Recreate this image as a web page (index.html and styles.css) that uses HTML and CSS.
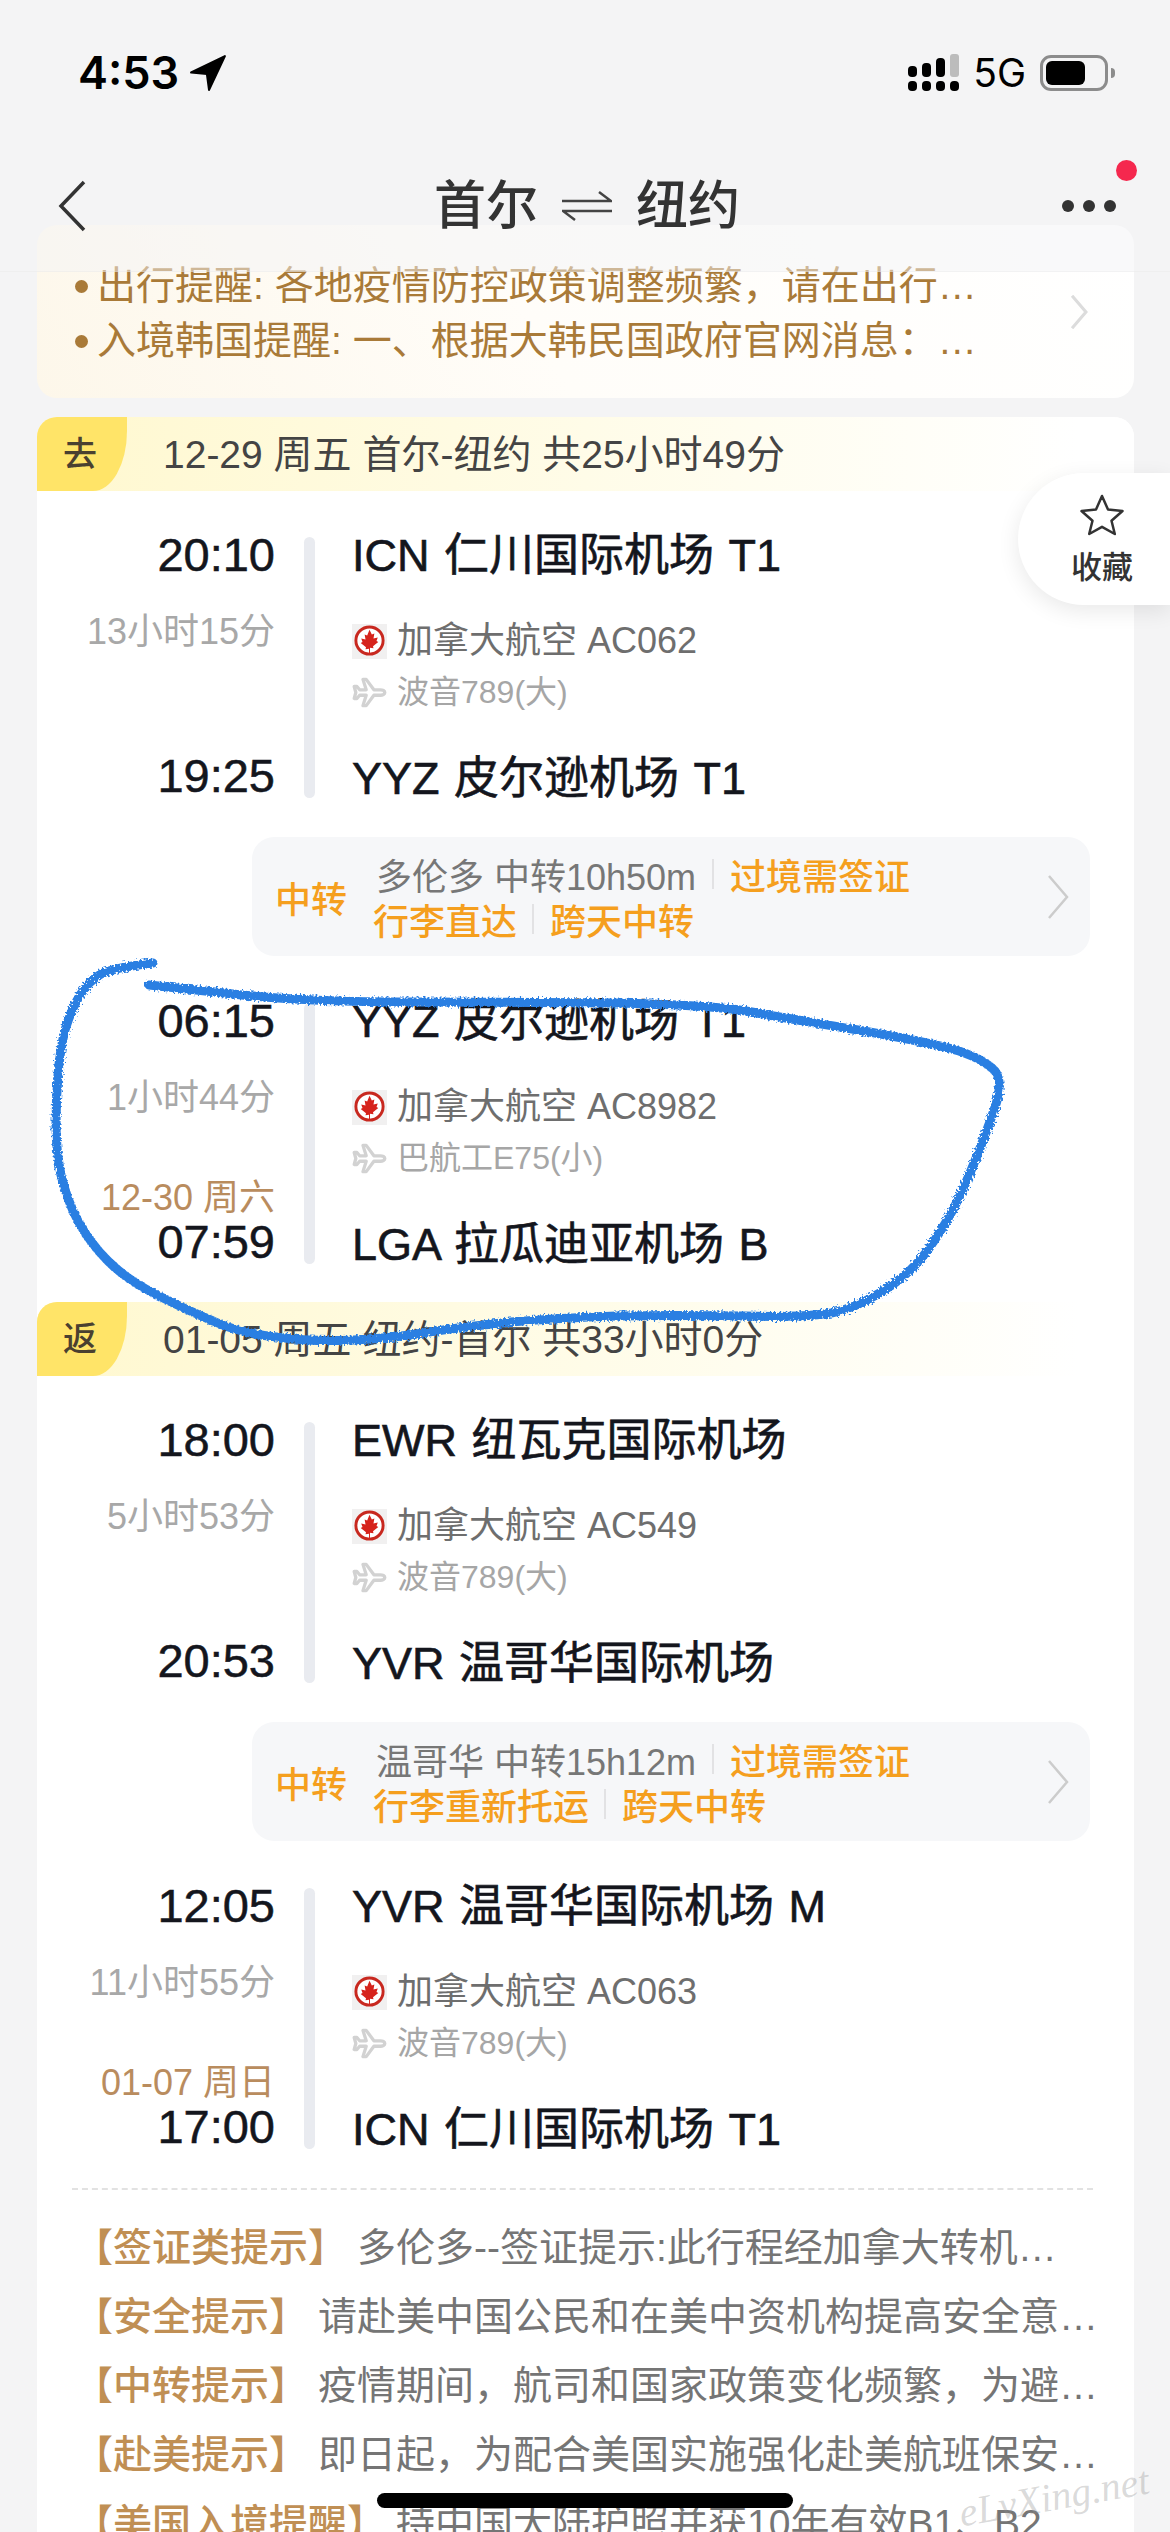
FILE: index.html
```html
<!DOCTYPE html>
<html lang="zh-CN">
<head>
<meta charset="utf-8">
<title>首尔 纽约</title>
<link rel="stylesheet" href="styles.css">
</head>
<body>
<svg class="defs" aria-hidden="true">
  <symbol id="ac" viewBox="0 0 36 36">
    <rect width="36" height="36" fill="#f1f0f0"/>
    <circle cx="18" cy="17" r="14" fill="#fff" stroke="#c8281f" stroke-width="3"/>
    <path fill="#d6231c" d="M18 6l2.4 4.8 2.6-1-.9 5.2 4.4-1-1.3 3.6 1.8 1-5.400 4.200.5 2.100-3.600-.5V31h-1v-5.500l-3.600.5.500-2.100L9 19.600l1.800-1-1.300-3.600 4.400 1-.9-5.200 2.600 1z"/>
  </symbol>
  <symbol id="plane" viewBox="0 0 32 32">
    <path fill="none" stroke="#d2d2d2" stroke-width="3" stroke-linejoin="round" d="M30 16c0-1.500-2-2.500-4-2.500h-6L13 4h-3l3 9.500H7l-2.500-3H2L3.500 16 2 21.500h2.500l2.500-3h6L10 28h3l7-9.500h6c2 0 4-1 4-2.500z"/>
  </symbol>
  <symbol id="chev" viewBox="0 0 22 44">
    <path fill="none" stroke="currentColor" d="M2 1l18 21L2 43"/>
  </symbol>
  <filter id="pen" x="-5%" y="-5%" width="110%" height="110%">
    <feTurbulence type="fractalNoise" baseFrequency="0.5" numOctaves="2" seed="4"/>
    <feDisplacementMap in="SourceGraphic" scale="7"/>
  </filter>
</svg>

<div class="screen">
  <header class="topbar">
    <div class="status">
      <div class="clock">
        <span>4:53</span>
        <svg class="loc" viewBox="0 0 36 36"><path fill="#000" stroke="#000" stroke-width="2" stroke-linejoin="round" d="M34 2L2 17.500l15 1.500 2 15z"/></svg>
      </div>
      <div class="status-right">
        <svg class="signal" viewBox="0 0 52 38">
          <g fill="#000">
            <rect x="0" y="12" width="9" height="11" rx="4"/><rect x="14" y="9" width="9" height="14" rx="4"/><rect x="28" y="4" width="9" height="19" rx="4"/>
            <rect x="0" y="27" width="9" height="10" rx="4"/><rect x="14" y="27" width="9" height="10" rx="4"/><rect x="28" y="27" width="9" height="10" rx="4"/><rect x="42" y="27" width="9" height="10" rx="4"/>
          </g>
          <rect x="42" y="0" width="9" height="23" rx="3" fill="#bcbcbc"/>
        </svg>
        <span class="net">5G</span>
        <div class="battery"><div class="battery-fill"></div></div>
        <div class="battery-nub"></div>
      </div>
    </div>
    <nav class="nav">
      <svg class="back" viewBox="0 0 28 52"><path fill="none" stroke="#333" stroke-width="3.500" d="M26 2L3 26l23 24"/></svg>
      <h1 class="title">
        <span>首尔</span>
        <svg class="swap" viewBox="0 0 50 30"><path fill="none" stroke="#444" stroke-width="2.500" d="M0 10h49L37 1M50 20H1l12 9"/></svg>
        <span>纽约</span>
      </h1>
      <div class="more"><i></i><i></i><i></i><b class="badge"></b></div>
    </nav>
  </header>

  <main class="content">
    <section class="notice">
      <div class="notice-lines">
        <p class="notice-line">出行提醒: 各地疫情防控政策调整频繁，请在出行…</p>
        <p class="notice-line">入境韩国提醒: 一、根据大韩民国政府官网消息：…</p>
      </div>
      <svg class="notice-chev"><use href="#chev"/></svg>
    </section>

    <section class="card">
      <div class="seg-head">
        <span class="seg-tag">去</span>
        <span class="seg-text">12-29 周五 首尔-纽约 共25小时49分</span>
      </div>

      <div class="leg">
        <div class="times">
          <div class="time">20:10</div>
          <div class="dur">13小时15分</div>
          <div class="arrive"><div class="time time-end">19:25</div></div>
        </div>
        <div class="bar"></div>
        <div class="info">
          <div class="airport">ICN 仁川国际机场 T1</div>
          <div class="airline"><svg class="ico"><use href="#ac"/></svg>加拿大航空 AC062</div>
          <div class="craft"><svg class="ico"><use href="#plane"/></svg>波音789(大)</div>
          <div class="airport airport-end">YYZ 皮尔逊机场 T1</div>
        </div>
      </div>

      <div class="transfer">
        <span class="transfer-label">中转</span>
        <div class="transfer-lines">
          <div class="transfer-line"><span class="city">多伦多 中转10h50m</span><i class="sep"></i><span>过境需签证</span></div>
          <div class="transfer-line"><span>行李直达</span><i class="sep"></i><span>跨天中转</span></div>
        </div>
        <svg class="transfer-chev"><use href="#chev"/></svg>
      </div>

      <div class="leg leg-after">
        <div class="times">
          <div class="time">06:15</div>
          <div class="dur">1小时44分</div>
          <div class="arrive"><div class="date">12-30 周六</div><div class="time time-end">07:59</div></div>
        </div>
        <div class="bar"></div>
        <div class="info">
          <div class="airport">YYZ 皮尔逊机场 T1</div>
          <div class="airline"><svg class="ico"><use href="#ac"/></svg>加拿大航空 AC8982</div>
          <div class="craft"><svg class="ico"><use href="#plane"/></svg>巴航工E75(小)</div>
          <div class="airport airport-end">LGA 拉瓜迪亚机场 B</div>
        </div>
      </div>

      <div class="seg-head seg-return">
        <span class="seg-tag">返</span>
        <span class="seg-text">01-05 周五 纽约-首尔 共33小时0分</span>
      </div>

      <div class="leg">
        <div class="times">
          <div class="time">18:00</div>
          <div class="dur">5小时53分</div>
          <div class="arrive"><div class="time time-end">20:53</div></div>
        </div>
        <div class="bar"></div>
        <div class="info">
          <div class="airport">EWR 纽瓦克国际机场</div>
          <div class="airline"><svg class="ico"><use href="#ac"/></svg>加拿大航空 AC549</div>
          <div class="craft"><svg class="ico"><use href="#plane"/></svg>波音789(大)</div>
          <div class="airport airport-end">YVR 温哥华国际机场</div>
        </div>
      </div>

      <div class="transfer">
        <span class="transfer-label">中转</span>
        <div class="transfer-lines">
          <div class="transfer-line"><span class="city">温哥华 中转15h12m</span><i class="sep"></i><span>过境需签证</span></div>
          <div class="transfer-line"><span>行李重新托运</span><i class="sep"></i><span>跨天中转</span></div>
        </div>
        <svg class="transfer-chev"><use href="#chev"/></svg>
      </div>

      <div class="leg leg-after">
        <div class="times">
          <div class="time">12:05</div>
          <div class="dur">11小时55分</div>
          <div class="arrive"><div class="date">01-07 周日</div><div class="time time-end">17:00</div></div>
        </div>
        <div class="bar"></div>
        <div class="info">
          <div class="airport">YVR 温哥华国际机场 M</div>
          <div class="airline"><svg class="ico"><use href="#ac"/></svg>加拿大航空 AC063</div>
          <div class="craft"><svg class="ico"><use href="#plane"/></svg>波音789(大)</div>
          <div class="airport airport-end">ICN 仁川国际机场 T1</div>
        </div>
      </div>

      <div class="tips">
        <div class="tip"><span class="tip-label">【签证类提示】</span><span class="tip-text">多伦多--签证提示:此行程经加拿大转机…</span></div>
        <div class="tip"><span class="tip-label">【安全提示】</span><span class="tip-text">请赴美中国公民和在美中资机构提高安全意…</span></div>
        <div class="tip"><span class="tip-label">【中转提示】</span><span class="tip-text">疫情期间，航司和国家政策变化频繁，为避…</span></div>
        <div class="tip"><span class="tip-label">【赴美提示】</span><span class="tip-text">即日起，为配合美国实施强化赴美航班保安…</span></div>
        <div class="tip"><span class="tip-label">【美国入境提醒】</span><span class="tip-text">持中国大陆护照并获10年有效B1、B2…</span></div>
      </div>
    </section>
  </main>

  <aside class="fav">
    <svg class="star" viewBox="0 0 44 42"><path fill="none" stroke="#333" stroke-width="2.500" stroke-linejoin="round" d="M22 2l6 13.500 14.500 1.500-11 9.800L34.800 40 22 32.800 9.200 40l3.300-13.200-11-9.800L16 15.500z"/></svg>
    <span>收藏</span>
  </aside>

  <svg class="ink" viewBox="0 0 1170 2532">
    <path filter="url(#pen)" fill="none" stroke="#2a7fe2" stroke-width="9" stroke-linecap="round" stroke-linejoin="round" d="M153 963Q112 968 101 974Q90 980 80 995Q71 1010 65 1030Q60 1050 58 1075Q56 1100 56 1125Q56 1150 61 1175Q67 1200 78 1221Q90 1243 108 1261Q127 1280 157 1295Q187 1310 213 1321Q239 1333 276 1337Q313 1342 354 1340Q396 1338 429 1332Q463 1327 511 1322Q560 1318 616 1316Q672 1315 746 1316Q821 1318 843 1310Q866 1303 892 1285Q918 1267 936 1238Q955 1210 970 1173Q985 1137 994 1110Q1004 1083 995 1071Q985 1060 959 1051Q933 1043 858 1030Q784 1018 746 1011Q709 1005 615 1003Q522 1002 410 1002Q299 1002 224 993L149 985"/>
  </svg>

  <div class="watermark">eLvXing.net</div>
  <div class="home"></div>
</div>
</body>
</html>
```

FILE: styles.css
```css
* { box-sizing: border-box; }
html, body { margin: 0; padding: 0; }
body {
  font-family: "Liberation Sans", "Noto Sans CJK SC", sans-serif;
  background: #f4f4f5;
}
p, h1 { margin: 0; }
.defs { position: absolute; width: 0; height: 0; }

.screen {
  position: relative;
  width: 1170px;
  height: 2532px;
  overflow: hidden;
  background: #f4f4f5;
}

/* translucent top bar */
.topbar {
  position: absolute;
  top: 0;
  left: 0;
  width: 100%;
  height: 272px;
  padding-top: 50px;
  background: rgba(244, 244, 245, 0.5);
  border-bottom: 1px solid rgba(225, 225, 225, 0.25);
  z-index: 3;
}
.status {
  display: flex;
  justify-content: space-between;
  align-items: center;
  height: 46px;
  padding: 0 55px 0 78px;
}
.clock {
  display: flex;
  align-items: center;
  gap: 10px;
  font-family: Inter, "Liberation Sans", sans-serif;
  font-weight: 600;
  font-size: 45px;
  line-height: 46px;
  color: #000;
}
.loc { width: 38px; height: 38px; }
.status-right { display: flex; align-items: center; }
.signal { width: 52px; height: 38px; }
.net {
  margin-left: 13px;
  font-family: Inter, "Liberation Sans", sans-serif;
  font-size: 39px;
  line-height: 46px;
  color: #000;
}
.battery {
  width: 68px;
  height: 36px;
  margin-left: 14px;
  padding: 3px;
  border: 3px solid #8c8c8c;
  border-radius: 11px;
}
.battery-fill { width: 39px; height: 24px; background: #000; border-radius: 6px; }
.battery-nub { width: 4px; height: 10px; margin-left: 3px; background: #8c8c8c; border-radius: 0 4px 4px 0; }

.nav {
  display: grid;
  grid-template-columns: 1fr auto 1fr;
  align-items: center;
  height: 50px;
  margin-top: 84px;
  padding: 0 54px 0 58px;
}
.back { width: 28px; height: 52px; }
.title {
  display: flex;
  align-items: center;
  gap: 24px;
  font-size: 52px;
  line-height: 50px;
  font-weight: 500;
  color: #333;
}
.swap { width: 50px; height: 30px; }
.more { position: relative; display: flex; justify-content: flex-end; gap: 9px; }
.more i { width: 12px; height: 12px; border-radius: 50%; background: #333; }
.badge {
  position: absolute;
  right: -21px;
  top: -40px;
  width: 21px;
  height: 21px;
  border-radius: 50%;
  background: #f5284e;
}

/* content flow */
.content { padding: 225px 36px 0 37px; }

.notice {
  display: flex;
  height: 173px;
  padding: 33px 46px 0 38px;
  border-radius: 20px;
  background: linear-gradient(60deg, #fdf7ea 0%, #fffdf9 45%, #fff 100%);
}
.notice-lines { width: 912px; }
.notice-line {
  position: relative;
  height: 55px;
  padding-left: 22px;
  font-size: 39px;
  line-height: 55px;
  color: #a97a38;
  white-space: nowrap;
}
.notice-line::before {
  content: "";
  position: absolute;
  left: 0;
  top: 22px;
  width: 13px;
  height: 13px;
  border-radius: 50%;
  background: #a97a38;
}
.notice-chev {
  width: 18px;
  height: 34px;
  margin: 37px 0 0 auto;
  color: #dcdcdc;
  stroke-width: 4;
}

.card {
  margin-top: 19px;
  background: #fff;
  border-radius: 20px 20px 0 0;
}
.seg-head {
  display: flex;
  align-items: center;
  height: 74px;
  background: linear-gradient(90deg, #fff8cf 0%, #fffce8 50%, #fff 95%);
  border-radius: 20px 20px 0 0;
}
.seg-return { margin-top: 38px; }
.seg-tag {
  width: 90px;
  height: 74px;
  background: #ffe468;
  border-radius: 20px 0 34px 0 / 20px 0 60px 0;
  font-size: 34px;
  line-height: 74px;
  font-weight: 500;
  text-align: center;
  color: #4a4030;
  padding-right: 4px;
}
.seg-text {
  margin: 2px 0 0 36px;
  font-size: 39px;
  line-height: 72px;
  color: #444;
}

.leg {
  display: flex;
  height: 261px;
  margin-top: 46px;
}
.leg-after { margin-top: 47px; }
.times {
  display: flex;
  flex-direction: column;
  width: 238px;
  text-align: right;
}
.time {
  font-size: 47px;
  line-height: 36px;
  color: #14161d;
  -webkit-text-stroke: 0.5px #14161d;
}
.time-end { line-height: 44px; }
.dur {
  margin-top: 41px;
  font-size: 36px;
  line-height: 36px;
  color: #a8a8a8;
}
.arrive { margin-top: auto; }
.date {
  margin-bottom: 4px;
  font-size: 36px;
  line-height: 36px;
  color: #b98c5e;
}
.bar {
  width: 11px;
  margin: 0 37px 0 29px;
  border-radius: 6px;
  background: #e9ebf0;
}
.info { display: flex; flex-direction: column; }
.airport {
  font-size: 45px;
  line-height: 38px;
  word-spacing: 2px;
  color: #14161d;
  -webkit-text-stroke: 0.6px #14161d;
  white-space: nowrap;
}
.airport-end { margin-top: auto; }
.ico { width: 35px; height: 35px; flex: none; margin-right: 10px; }
.airline {
  display: flex;
  align-items: center;
  margin-top: 48px;
  font-size: 36px;
  line-height: 36px;
  color: #6e6e6e;
}
.craft {
  display: flex;
  align-items: center;
  margin-top: 15px;
  font-size: 32px;
  line-height: 36px;
  color: #a6a6a6;
}

.transfer {
  display: flex;
  align-items: center;
  height: 119px;
  margin: 39px 44px 0 215px;
  padding: 0 21px 0 23px;
  border-radius: 22px;
  background: #f6f7f9;
  color: #f59f1e;
  font-size: 36px;
  font-weight: 500;
}
.transfer-label { width: 72px; margin: 8px 26px 0 0; line-height: 44px; }
.transfer-lines { display: flex; flex-direction: column; gap: 1px; }
.transfer-line { display: flex; align-items: center; height: 44px; white-space: nowrap; }
.city { color: #777; font-weight: 400; margin-left: 3px; margin-right: 1px; }
.sep { width: 2px; height: 30px; margin: 0 16px 0 15px; background: #e2e2e4; }
.transfer-chev { width: 22px; height: 44px; margin-left: auto; color: #cccccc; stroke-width: 2.5; }

.tips {
  margin: 39px 41px 0 35px;
  padding: 23px 0 0 2px;
  border-top: 2px dashed #e2e2e2;
}
.tip {
  display: flex;
  height: 69px;
  font-size: 39px;
  line-height: 69px;
  white-space: nowrap;
}
.tip-label { flex: none; color: #c08f54; font-weight: 500; margin-right: 10px; }
.tip-text { color: #757575; }

/* floating favourite tab */
.fav {
  position: absolute;
  top: 473px;
  right: 0;
  width: 152px;
  height: 132px;
  padding-left: 16px;
  background: #fff;
  border-radius: 66px 0 0 66px;
  box-shadow: 0 6px 22px rgba(0, 0, 0, 0.09);
  text-align: center;
  font-size: 31px;
  line-height: 36px;
  font-weight: 500;
  color: #333;
}
.star { display: block; width: 44px; height: 42px; margin: 21px auto 14px; }

/* hand-drawn pen annotation on the screenshot */
.ink {
  position: absolute;
  top: 0;
  left: 0;
  width: 1170px;
  height: 2532px;
  z-index: 4;
  pointer-events: none;
}
.watermark {
  position: absolute;
  left: 958px;
  top: 2472px;
  z-index: 5;
  font-family: "Liberation Serif", serif;
  font-style: italic;
  font-size: 40px;
  line-height: 50px;
  color: rgba(140, 140, 140, 0.32);
  transform: rotate(-10deg);
}
.home {
  position: absolute;
  left: 377px;
  top: 2493px;
  width: 416px;
  height: 15px;
  border-radius: 8px;
  background: #000;
  z-index: 5;
}
```
